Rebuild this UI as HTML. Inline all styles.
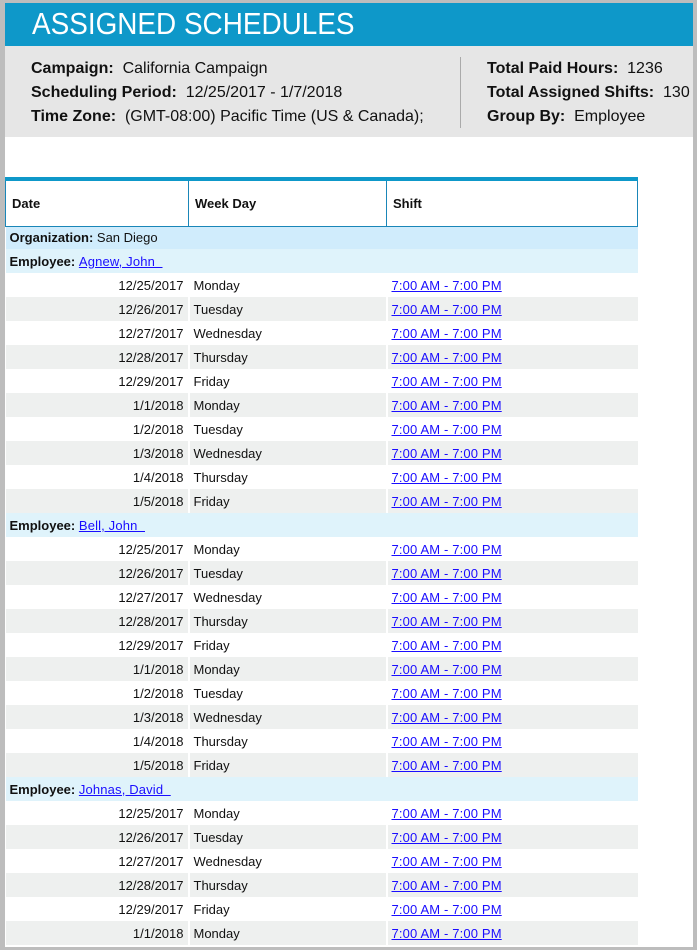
<!DOCTYPE html>
<html><head><meta charset="utf-8"><style>
*{margin:0;padding:0;box-sizing:border-box}
body{width:697px;height:950px;background:#bdbdbd;overflow:hidden;font-family:"Liberation Sans",Arial,sans-serif;}
#page{position:absolute;left:5px;top:3px;width:688px;height:944px;background:#fff;overflow:hidden}
#ban{height:43px;background:#0e98c9;color:#fff;font-size:31px;line-height:42px;padding-left:27px;}
#ban span{display:inline-block;transform:scaleX(0.9);transform-origin:left}
#info{height:91px;background:#e6e6e6;position:relative;font-size:16px;color:#111}
#info .l{position:absolute;left:26px;top:11px;line-height:24px;width:420px}
#info .r{position:absolute;left:482px;top:11px;line-height:24px}
#info .d{position:absolute;left:455px;top:11px;width:1px;height:71px;background:#aaa}
#info .clip{height:71px;overflow:hidden}
b{font-weight:bold}
table{position:absolute;left:0;top:174px;width:632px;border-collapse:collapse;table-layout:fixed;font-size:13px;color:#111}
thead tr{height:47px}
thead th{text-align:left;font-weight:bold;font-size:13px;padding-left:6px;border:1px solid #1a86b8;background:#fff}
thead{border-top:4px solid #0e98c9}
td{height:24px;padding:0 4px;border-left:2px solid #fff;white-space:nowrap}
td:first-child{border-left:none}
tr.o td{background:#d0ecfc;height:23px}
tr.e td{background:#dff3fb}
tr.g td{background:#eef0ef}
td.dt{text-align:right}
a{color:#1a0dff;text-decoration:underline;letter-spacing:0.15px}
</style></head><body><div id="page">
<div id="ban"><span>ASSIGNED SCHEDULES</span></div>
<div id="info">
<div class="l clip"><b>Campaign:</b>&nbsp; California Campaign<br><b>Scheduling Period:</b>&nbsp; 12/25/2017 - 1/7/2018<br><b>Time Zone:</b>&nbsp; (GMT-08:00) Pacific Time (US &amp; Canada); Tijuana</div>
<div class="d"></div>
<div class="r"><b>Total Paid Hours:</b>&nbsp; 1236<br><b>Total Assigned Shifts:</b>&nbsp; 130<br><b>Group By:</b>&nbsp; Employee</div>
</div>
<table>
<colgroup><col style="width:183px"><col style="width:198px"><col style="width:251px"></colgroup>
<thead><tr><th>Date</th><th>Week Day</th><th>Shift</th></tr></thead>
<tbody>
<tr class="o"><td colspan="3"><b>Organization:</b> San Diego</td></tr>
<tr class="e"><td colspan="3"><b>Employee:</b> <a>Agnew, John&nbsp;&nbsp;</a></td></tr>
<tr><td class="dt">12/25/2017</td><td>Monday</td><td><a>7:00 AM - 7:00 PM</a></td></tr>
<tr class="g"><td class="dt">12/26/2017</td><td>Tuesday</td><td><a>7:00 AM - 7:00 PM</a></td></tr>
<tr><td class="dt">12/27/2017</td><td>Wednesday</td><td><a>7:00 AM - 7:00 PM</a></td></tr>
<tr class="g"><td class="dt">12/28/2017</td><td>Thursday</td><td><a>7:00 AM - 7:00 PM</a></td></tr>
<tr><td class="dt">12/29/2017</td><td>Friday</td><td><a>7:00 AM - 7:00 PM</a></td></tr>
<tr class="g"><td class="dt">1/1/2018</td><td>Monday</td><td><a>7:00 AM - 7:00 PM</a></td></tr>
<tr><td class="dt">1/2/2018</td><td>Tuesday</td><td><a>7:00 AM - 7:00 PM</a></td></tr>
<tr class="g"><td class="dt">1/3/2018</td><td>Wednesday</td><td><a>7:00 AM - 7:00 PM</a></td></tr>
<tr><td class="dt">1/4/2018</td><td>Thursday</td><td><a>7:00 AM - 7:00 PM</a></td></tr>
<tr class="g"><td class="dt">1/5/2018</td><td>Friday</td><td><a>7:00 AM - 7:00 PM</a></td></tr>
<tr class="e"><td colspan="3"><b>Employee:</b> <a>Bell, John&nbsp;&nbsp;</a></td></tr>
<tr><td class="dt">12/25/2017</td><td>Monday</td><td><a>7:00 AM - 7:00 PM</a></td></tr>
<tr class="g"><td class="dt">12/26/2017</td><td>Tuesday</td><td><a>7:00 AM - 7:00 PM</a></td></tr>
<tr><td class="dt">12/27/2017</td><td>Wednesday</td><td><a>7:00 AM - 7:00 PM</a></td></tr>
<tr class="g"><td class="dt">12/28/2017</td><td>Thursday</td><td><a>7:00 AM - 7:00 PM</a></td></tr>
<tr><td class="dt">12/29/2017</td><td>Friday</td><td><a>7:00 AM - 7:00 PM</a></td></tr>
<tr class="g"><td class="dt">1/1/2018</td><td>Monday</td><td><a>7:00 AM - 7:00 PM</a></td></tr>
<tr><td class="dt">1/2/2018</td><td>Tuesday</td><td><a>7:00 AM - 7:00 PM</a></td></tr>
<tr class="g"><td class="dt">1/3/2018</td><td>Wednesday</td><td><a>7:00 AM - 7:00 PM</a></td></tr>
<tr><td class="dt">1/4/2018</td><td>Thursday</td><td><a>7:00 AM - 7:00 PM</a></td></tr>
<tr class="g"><td class="dt">1/5/2018</td><td>Friday</td><td><a>7:00 AM - 7:00 PM</a></td></tr>
<tr class="e"><td colspan="3"><b>Employee:</b> <a>Johnas, David&nbsp;&nbsp;</a></td></tr>
<tr><td class="dt">12/25/2017</td><td>Monday</td><td><a>7:00 AM - 7:00 PM</a></td></tr>
<tr class="g"><td class="dt">12/26/2017</td><td>Tuesday</td><td><a>7:00 AM - 7:00 PM</a></td></tr>
<tr><td class="dt">12/27/2017</td><td>Wednesday</td><td><a>7:00 AM - 7:00 PM</a></td></tr>
<tr class="g"><td class="dt">12/28/2017</td><td>Thursday</td><td><a>7:00 AM - 7:00 PM</a></td></tr>
<tr><td class="dt">12/29/2017</td><td>Friday</td><td><a>7:00 AM - 7:00 PM</a></td></tr>
<tr class="g"><td class="dt">1/1/2018</td><td>Monday</td><td><a>7:00 AM - 7:00 PM</a></td></tr>
<tr><td class="dt">1/2/2018</td><td>Tuesday</td><td><a>7:00 AM - 7:00 PM</a></td></tr>
</tbody></table>
</div></body></html>
